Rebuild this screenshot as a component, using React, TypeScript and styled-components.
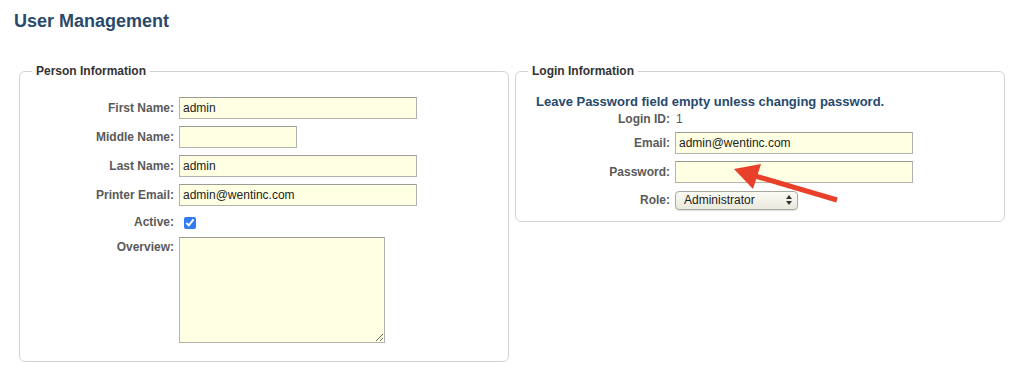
import React from "react";
import styled, { createGlobalStyle } from "styled-components";

const GlobalStyle = createGlobalStyle`
  body {
    margin: 0;
    background: #fff;
    font-family: "Liberation Sans", Arial, Helvetica, sans-serif;
  }
`;

const Page = styled.div`
  position: relative;
  width: 1024px;
  min-height: 377px;
  box-sizing: border-box;
  padding-top: 11px;
`;

const Title = styled.h1`
  margin: 0 0 0 14px;
  font-size: 18px;
  line-height: 21px;
  font-weight: bold;
  color: #294a6b;
`;

const Columns = styled.div`
  display: flex;
  align-items: flex-start;
  gap: 6px;
  padding: 0 19px;
  margin-top: 32px;
`;

const Panel = styled.fieldset<{ $pb: number }>`
  flex: 1;
  min-width: 0;
  margin: 0;
  padding: 16px 12px ${(p) => p.$pb}px;
  border: 1px solid #d2d2d2;
  border-radius: 6px;
`;

const Legend = styled.legend`
  padding: 0 4px;
  font-size: 12px;
  line-height: 14px;
  font-weight: bold;
  color: #333;
`;

const Form = styled.div<{ $top?: number }>`
  display: grid;
  grid-template-columns: 142px 1fr;
  column-gap: 5px;
  row-gap: 7px;
  align-items: center;
  padding-top: ${(p) => p.$top ?? 0}px;
`;

const Label = styled.label<{ $top?: boolean; $lh?: number }>`
  text-align: right;
  font-size: 12px;
  line-height: ${(p) => p.$lh ?? 14}px;
  font-weight: bold;
  color: #5a5a5a;
  align-self: ${(p) => (p.$top ? "start" : "center")};
  padding-top: ${(p) => (p.$top ? "3px" : "0")};
`;

const Value = styled.div`
  font-size: 12px;
  line-height: 12px;
  color: #555;
  padding-left: 1px;
`;

const TextInput = styled.input<{ $w: number }>`
  width: ${(p) => p.$w}px;
  height: 22px;
  box-sizing: border-box;
  margin: 0;
  padding: 0 3px;
  border: 1px solid #b3b3ab;
  border-top-color: #9c9c96;
  background: #ffffe3;
  font-family: inherit;
  font-size: 12px;
  color: #222;
  outline: none;
`;

const TextArea = styled.textarea`
  display: block;
  width: 206px;
  height: 106px;
  box-sizing: border-box;
  margin: 0;
  padding: 3px;
  border: 1px solid #b3b3ab;
  border-top-color: #9c9c96;
  background: #ffffe3;
  font-family: inherit;
  font-size: 12px;
  outline: none;
`;

const CheckCell = styled.div`
  display: flex;
  align-items: center;
  height: 17px;
  padding-top: 2px;
  box-sizing: border-box;
`;

const Check = styled.input`
  width: 12px;
  height: 12px;
  margin: 0 0 0 5px;
  accent-color: #2f7cf6;
`;

const Message = styled.p`
  margin: 0 0 4px 8px;
  font-size: 13px;
  line-height: 15px;
  font-weight: bold;
  color: #26496d;
`;

const SelectWrap = styled.div`
  position: relative;
  display: inline-block;
  width: 123px;
  height: 19px;
`;

const Select = styled.select`
  appearance: none;
  width: 123px;
  height: 19px;
  box-sizing: border-box;
  margin: 0;
  padding: 0 0 0 8px;
  border: 1px solid #a9a9a0;
  border-radius: 4px;
  background: linear-gradient(#fbfbf4, #e9e9dd);
  box-shadow: 0 1px 1px rgba(0, 0, 0, 0.12);
  font-family: inherit;
  font-size: 12px;
  color: #222;
  outline: none;
`;

const SelectArrows = styled.svg`
  position: absolute;
  right: 6px;
  top: 5px;
  pointer-events: none;
`;

const Annotation = styled.svg`
  position: absolute;
  left: 0;
  top: 0;
  pointer-events: none;
`;

const App = () => {
  return (
    <Page>
      <GlobalStyle />
      <Title>User Management</Title>
      <Columns>
        <Panel $pb={18}>
          <Legend>Person Information</Legend>
          <Form $top={3}>
            <Label>First Name:</Label>
            <div>
              <TextInput $w={238} defaultValue="admin" />
            </div>
            <Label>Middle Name:</Label>
            <div>
              <TextInput $w={118} defaultValue="" />
            </div>
            <Label>Last Name:</Label>
            <div>
              <TextInput $w={238} defaultValue="admin" />
            </div>
            <Label>Printer Email:</Label>
            <div>
              <TextInput $w={238} defaultValue="admin@wentinc.com" />
            </div>
            <Label>Active:</Label>
            <CheckCell>
              <Check type="checkbox" defaultChecked />
            </CheckCell>
            <Label $top>Overview:</Label>
            <div>
              <TextArea />
            </div>
          </Form>
        </Panel>
        <Panel $pb={12}>
          <Legend>Login Information</Legend>
          <Message>Leave Password field empty unless changing password.</Message>
          <Form>
            <Label $lh={12}>Login ID:</Label>
            <Value>1</Value>
            <Label>Email:</Label>
            <div>
              <TextInput $w={238} defaultValue="admin@wentinc.com" />
            </div>
            <Label>Password:</Label>
            <div>
              <TextInput $w={238} type="password" defaultValue="" />
            </div>
            <Label>Role:</Label>
            <div>
              <SelectWrap>
                <Select defaultValue="Administrator">
                  <option>Administrator</option>
                  <option>User</option>
                </Select>
                <SelectArrows width="6" height="10" viewBox="0 0 6 10">
                  <path d="M3 0 L6 4 L0 4 Z" fill="#333" />
                  <path d="M3 10 L6 6 L0 6 Z" fill="#333" />
                </SelectArrows>
              </SelectWrap>
            </div>
          </Form>
        </Panel>
      </Columns>
      <Annotation width="1024" height="377" viewBox="0 0 1024 377">
        <line x1="837" y1="200" x2="752" y2="175" stroke="#e8402a" strokeWidth="5" strokeLinecap="butt" />
        <polygon points="734,169 761,164 753,189" fill="#e8402a" />
      </Annotation>
    </Page>
  );
};

export default App;
